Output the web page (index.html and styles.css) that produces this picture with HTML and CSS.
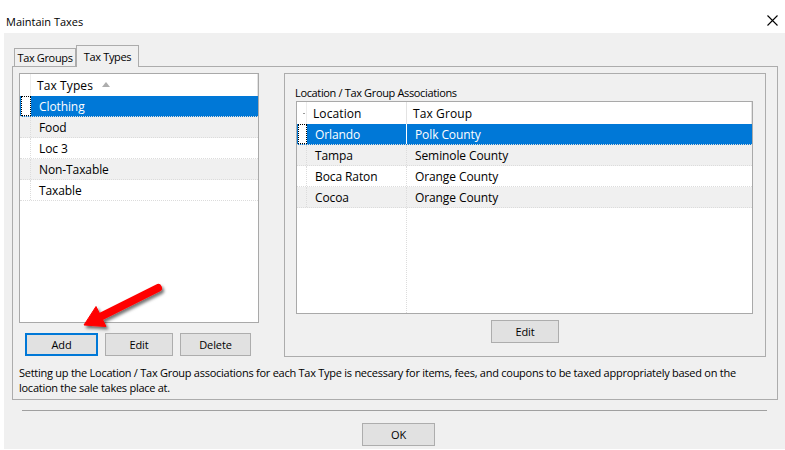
FILE: index.html
```html
<!doctype html>
<html lang="en">
  <head>
    <meta charset="UTF-8" />
    <title>Maintain Taxes</title>
    <link rel="stylesheet" href="styles.css">
  </head>
  <body>
    <div class="titlebar">
      <span class="title">Maintain Taxes</span>
      <svg class="close" width="11" height="11" viewBox="0 0 11 11">
        <path d="M0.5 0.5 L10.5 10.5 M10.5 0.5 L0.5 10.5" stroke="#000" stroke-width="1.1" fill="none" />
      </svg>
    </div>

    <div class="dialog">
      <div class="tabs">
        <div class="tab">Tax Groups</div>
        <div class="tab active">Tax Types</div>
      </div>

      <div class="tabpage">
        <div class="content">
          <div class="leftcol">
            <div class="list">
              <div class="row header">
                <div class="ind"></div>
                <div class="cell">Tax Types <span class="sort"></span></div>
              </div>
              <div class="row selected">
                <div class="ind focus"></div>
                <div class="cell">Clothing</div>
              </div>
              <div class="row alt">
                <div class="ind"></div>
                <div class="cell">Food</div>
              </div>
              <div class="row">
                <div class="ind"></div>
                <div class="cell">Loc 3</div>
              </div>
              <div class="row alt">
                <div class="ind"></div>
                <div class="cell">Non-Taxable</div>
              </div>
              <div class="row">
                <div class="ind"></div>
                <div class="cell">Taxable</div>
              </div>
            </div>
            <div class="buttons">
              <button class="btn focused add">Add</button>
              <button class="btn edit">Edit</button>
              <button class="btn delete">Delete</button>
            </div>
          </div>

          <div class="groupbox">
            <div class="legend">Location / Tax Group Associations</div>
            <div class="grid">
              <div class="row header">
                <div class="ind"><span class="tick"></span></div>
                <div class="cell loc">Location</div>
                <div class="cell grp">Tax Group</div>
              </div>
              <div class="row selected">
                <div class="ind focus"></div>
                <div class="cell loc">Orlando</div>
                <div class="cell grp">Polk County</div>
              </div>
              <div class="row alt">
                <div class="ind"></div>
                <div class="cell loc">Tampa</div>
                <div class="cell grp">Seminole County</div>
              </div>
              <div class="row">
                <div class="ind"></div>
                <div class="cell loc">Boca Raton</div>
                <div class="cell grp">Orange County</div>
              </div>
              <div class="row alt">
                <div class="ind"></div>
                <div class="cell loc">Cocoa</div>
                <div class="cell grp">Orange County</div>
              </div>
              <div class="row filler">
                <div class="ind"></div>
                <div class="cell loc"></div>
              </div>
            </div>
            <button class="btn group-edit">Edit</button>
          </div>
        </div>

        <p class="note">Setting up the Location / Tax Group associations for each Tax Type is necessary for items, fees, and coupons to be taxed appropriately based on the location the sale takes place at.</p>
      </div>

      <div class="separator"></div>
      <div class="footer">
        <button class="btn ok">OK</button>
      </div>
    </div>

    <svg class="arrow" width="100" height="62" viewBox="0 0 100 62">
      <defs>
        <filter id="shadow" x="-20%" y="-20%" width="150%" height="160%">
          <feDropShadow dx="2" dy="2.5" stdDeviation="1.4" flood-color="#000" flood-opacity="0.55" />
        </filter>
      </defs>
      <g filter="url(#shadow)" fill="#f00" stroke="#f00">
        <line x1="88" y1="13" x2="30" y2="42" stroke-width="8" stroke-linecap="round" />
        <polygon points="14,50 26,31.5 36,51.5" stroke-width="1" stroke-linejoin="round" />
      </g>
    </svg>
  </body>
</html>
```

FILE: styles.css
```css
* {
  box-sizing: border-box;
}
body {
  margin: 0;
  width: 785px;
  height: 450px;
  background: #fff;
  font-family: "Open Sans", "Noto Sans", sans-serif;
  font-size: 11px;
  letter-spacing: -0.35px;
  color: #000;
  position: relative;
  overflow: hidden;
}
.titlebar {
  height: 33px;
  padding: 9px 7px 0 6px;
  display: flex;
  align-items: center;
  justify-content: space-between;
  letter-spacing: 0;
}
.close {
  margin-top: -1px;
}
.dialog {
  margin-left: 4px;
  height: 416px;
  background: #f0f0f0;
}
.tabs {
  height: 33px;
  padding-left: 10px;
  display: flex;
  align-items: flex-end;
}
.tab {
  height: 18px;
  width: 62px;
  border: 1px solid #acacac;
  border-bottom: none;
  text-align: center;
  line-height: 17px;
  white-space: nowrap;
  background: #f0f0f0;
}
.tab.active {
  width: 63px;
  height: 22px;
  margin-bottom: -1px;
  line-height: 21px;
  position: relative;
  z-index: 1;
}
.tabpage {
  margin-left: 8px;
  width: 766px;
  height: 334px;
  border: 1px solid #acacac;
  padding: 6px 6px 0 6px;
}
.content {
  display: flex;
}
.leftcol {
  width: 240px;
}
.list {
  height: 250px;
  border: 1px solid #a9a9a9;
  background: #fff;
}
.row {
  display: flex;
  height: 21px;
  border-bottom: 1px dotted #dcdcdc;
  font-size: 12px;
  letter-spacing: -0.1px;
}
.row .ind {
  width: 11px;
  flex: none;
  border-right: 1px dotted #dcdcdc;
}
.row .cell {
  display: flex;
  align-items: center;
  padding-left: 8px;
  white-space: nowrap;
}
.list .row .cell {
  flex: 1;
}
.row.header {
  height: 22px;
  border-bottom: none;
  letter-spacing: 0.1px;
}
.row.header .ind {
  border-right: 1px solid #ececec;
}
.row.header .cell {
  padding-left: 6px;
  border-right: 1px solid #e3e3e3;
}
.row.alt {
  background: #f0f0f0;
}
.row.selected {
  background: #0078d7;
  color: #fff;
}
.row.selected .ind {
  background: #fff;
  border: 1px dotted #000;
  width: 10px;
  margin-left: 1px;
}
.sort {
  width: 0;
  height: 0;
  margin-left: 9px;
  margin-top: -2px;
  border-left: 4px solid transparent;
  border-right: 4px solid transparent;
  border-bottom: 5px solid #adadad;
}
.buttons {
  margin-top: 10px;
  padding-left: 6px;
  display: flex;
  gap: 7px;
}
.btn {
  height: 23px;
  padding: 0;
  background: #e1e1e1;
  border: 1px solid #adadad;
  font-family: inherit;
  font-size: 11px;
  letter-spacing: -0.1px;
  color: #000;
}
.btn.focused {
  border: 2px solid #0078d7;
}
.add {
  width: 73px;
}
.edit {
  width: 68px;
}
.delete {
  width: 71px;
}
.groupbox {
  margin-left: 25px;
  width: 482px;
  height: 284px;
  border: 1px solid #acacac;
  display: flex;
  flex-direction: column;
}
.legend {
  padding: 11px 0 0 10px;
  line-height: 15px;
}
.grid {
  margin: 1px 0 0 11px;
  width: 457px;
  height: 213px;
  border: 1px solid #a9a9a9;
  background: #fff;
  display: flex;
  flex-direction: column;
}
.grid .row .ind {
  width: 10px;
  display: flex;
  align-items: center;
  justify-content: flex-end;
}
.tick {
  width: 2px;
  height: 1px;
  margin-right: 1px;
  background: #9a9a9a;
}
.grid .cell.loc {
  width: 100px;
  flex: none;
  border-right: 1px dotted #dcdcdc;
}
.grid .cell.grp {
  flex: 1;
}
.grid .row.header .cell.loc {
  border-right: 1px solid #e3e3e3;
}
.grid .row.selected .cell.loc {
  border-right: 1px solid #fff;
}
.grid .row.selected .ind {
  width: 9px;
}
.grid .row.filler {
  flex: 1;
  border-bottom: none;
}
.grid .row.filler .ind {
  border-right: none;
}
.group-edit {
  width: 68px;
  margin: 6px auto 0;
}
.note {
  margin: 8px 0 0 0;
  width: 740px;
  line-height: 15px;
  letter-spacing: -0.26px;
}
.separator {
  margin: 10px 0 0 18px;
  width: 745px;
  height: 1px;
  background: #a0a0a0;
}
.footer {
  padding: 12px 0 0 358px;
}
.ok {
  width: 73px;
}
.arrow {
  position: absolute;
  left: 70px;
  top: 275px;
}
```
